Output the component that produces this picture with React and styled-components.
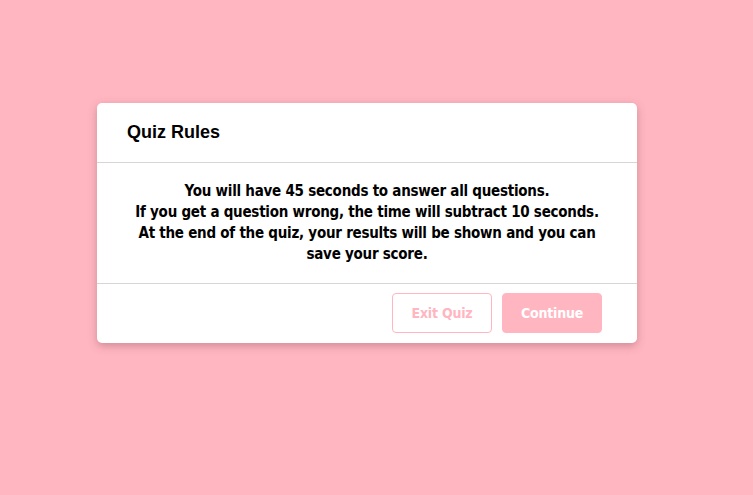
import React from "react";
import styled, { createGlobalStyle } from "styled-components";

const Global = createGlobalStyle`
  html, body { margin: 0; padding: 0; background: #ffb6c1; }
  body { min-height: 495px; }
`;

const Page = styled.div`
  min-height: 495px;
  padding: 103px 0 0 97px;
  box-sizing: border-box;
`;

const Card = styled.div`
  width: 540px;
  background: #fff;
  border-radius: 5px;
  box-shadow: 0 3px 8px rgba(120, 60, 70, 0.35);
`;

const Header = styled.div`
  height: 59px;
  display: flex;
  align-items: center;
  padding: 0 30px;
  border-bottom: 1px solid #d6d6d6;
`;

const Title = styled.h2`
  margin: 0;
  font-family: "Liberation Sans", Arial, sans-serif;
  font-weight: bold;
  font-size: 18px;
  color: #000;
`;

const Body = styled.div`
  padding: 18px 20px 18px;
  border-bottom: 1px solid #d6d6d6;
  text-align: center;
  font-family: "DejaVu Sans Condensed", "DejaVu Sans", sans-serif;
  font-weight: bold;
  font-size: 15px;
  line-height: 21px;
  letter-spacing: -0.25px;
  color: #000;
`;

const Line = styled.span`
  display: block;
  white-space: nowrap;
`;

const Footer = styled.div`
  display: flex;
  justify-content: flex-end;
  gap: 10px;
  padding: 9px 35px 10px;
`;

const Button = styled.button`
  width: 100px;
  height: 40px;
  border-radius: 4px;
  font-family: "DejaVu Sans Condensed", "DejaVu Sans", sans-serif;
  font-weight: bold;
  font-size: 14px;
  letter-spacing: -0.2px;
  cursor: pointer;
  color: ${(p) => (p.$primary ? "#fff" : "#ffb6c1")};
  background: ${(p) => (p.$primary ? "#ffb6c1" : "#fff")};
  border: 1px solid #ffb6c1;
`;

export default function App() {
  return (
    <>
      <Global />
      <Page>
        <Card>
          <Header>
            <Title>Quiz Rules</Title>
          </Header>
          <Body>
            <Line>You will have 45 seconds to answer all questions.</Line>
            <Line>If you get a question wrong, the time will subtract 10 seconds.</Line>
            <Line>At the end of the quiz, your results will be shown and you can</Line>
            <Line>save your score.</Line>
          </Body>
          <Footer>
            <Button>Exit Quiz</Button>
            <Button $primary>Continue</Button>
          </Footer>
        </Card>
      </Page>
    </>
  );
}
